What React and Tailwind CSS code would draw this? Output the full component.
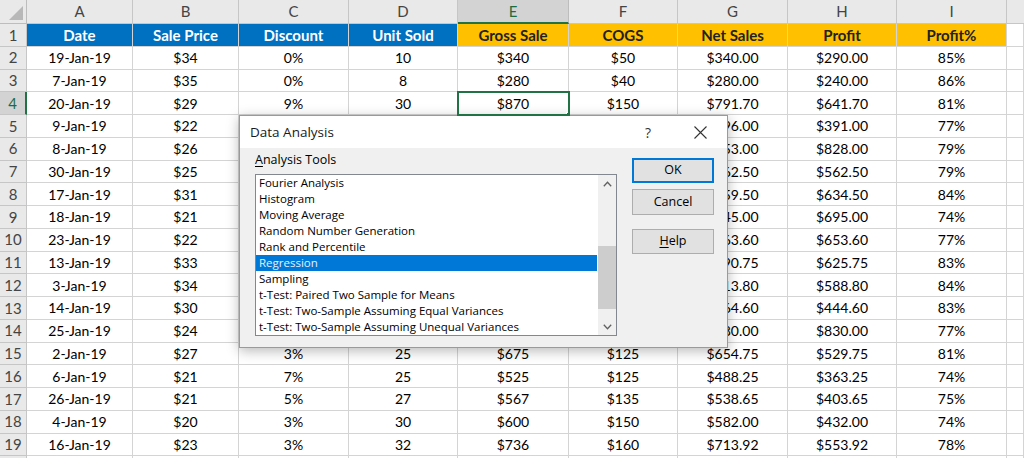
import React from "react";

const cols = ["A", "B", "C", "D", "E", "F", "G", "H", "I"];
const headers = ["Date", "Sale Price", "Discount", "Unit Sold", "Gross Sale", "COGS", "Net Sales", "Profit", "Profit%"];

// rows 5-14: columns C-F sit fully behind the dialog, so they are left blank
const rows = [
  ["19-Jan-19", "$34", "0%", "10", "$340", "$50", "$340.00", "$290.00", "85%"],
  ["7-Jan-19", "$35", "0%", "8", "$280", "$40", "$280.00", "$240.00", "86%"],
  ["20-Jan-19", "$29", "9%", "30", "$870", "$150", "$791.70", "$641.70", "81%"],
  ["9-Jan-19", "$22", "", "", "", "", "$496.00", "$391.00", "77%"],
  ["8-Jan-19", "$26", "", "", "", "", "$953.00", "$828.00", "79%"],
  ["30-Jan-19", "$25", "", "", "", "", "$662.50", "$562.50", "79%"],
  ["17-Jan-19", "$31", "", "", "", "", "$759.50", "$634.50", "84%"],
  ["18-Jan-19", "$21", "", "", "", "", "$845.00", "$695.00", "74%"],
  ["23-Jan-19", "$22", "", "", "", "", "$763.60", "$653.60", "77%"],
  ["13-Jan-19", "$33", "", "", "", "", "$790.75", "$625.75", "83%"],
  ["3-Jan-19", "$34", "", "", "", "", "$713.80", "$588.80", "84%"],
  ["14-Jan-19", "$30", "", "", "", "", "$564.60", "$444.60", "83%"],
  ["25-Jan-19", "$24", "", "", "", "", "$980.00", "$830.00", "77%"],
  ["2-Jan-19", "$27", "3%", "25", "$675", "$125", "$654.75", "$529.75", "81%"],
  ["6-Jan-19", "$21", "7%", "25", "$525", "$125", "$488.25", "$363.25", "74%"],
  ["26-Jan-19", "$21", "5%", "27", "$567", "$135", "$538.65", "$403.65", "75%"],
  ["4-Jan-19", "$20", "3%", "30", "$600", "$150", "$582.00", "$432.00", "74%"],
  ["16-Jan-19", "$23", "3%", "32", "$736", "$160", "$713.92", "$553.92", "78%"],
];

const tools = [
  "Fourier Analysis",
  "Histogram",
  "Moving Average",
  "Random Number Generation",
  "Rank and Percentile",
  "Regression",
  "Sampling",
  "t-Test: Paired Two Sample for Means",
  "t-Test: Two-Sample Assuming Equal Variances",
  "t-Test: Two-Sample Assuming Unequal Variances",
];

const cell = "flex items-center justify-center border-r border-b border-[#d4d4d4] whitespace-nowrap overflow-hidden";

function Sheet() {
  return (
    <div className="grid grid-cols-[27px_106px_106px_110px_109px_111px_109px_110px_109px_110px_1fr] grid-rows-[24px] auto-rows-[22.75px] text-[14px] text-black [font-family:Lato,'Open_Sans',sans-serif]">
      {/* corner */}
      <div className="relative bg-[#e9e9e9] border-r border-b border-[#bdbdbd]">
        <svg className="absolute right-[3px] bottom-[3px]" width="14" height="14" viewBox="0 0 14 14">
          <polygon points="14,0 14,14 0,14" fill="#b8b8b8" />
        </svg>
      </div>
      {cols.map((c) => (
        <div
          key={c}
          className={
            c === "E"
              ? "flex items-center justify-center bg-[#d3d3d3] border-r border-[#bdbdbd] border-b-2 border-b-[#217346] text-[15px] text-[#1e6b3f]"
              : "flex items-center justify-center bg-[#e9e9e9] border-r border-b border-[#c6c6c6] text-[15px] text-[#444]"
          }
        >
          {c}
        </div>
      ))}
      <div className="bg-[#e9e9e9] border-b border-[#c6c6c6]" />

      {/* row 1 headers */}
      <div className="flex items-center justify-center bg-[#e9e9e9] border-r border-b border-[#c6c6c6] text-[15px] text-[#444]">1</div>
      {headers.map((h, i) => (
        <div
          key={h}
          className={
            i < 4
              ? `${cell} bg-[#0070c0] text-white font-bold text-[15px]`
              : `${cell} bg-[#ffc000] text-[#222] font-bold text-[15px]`
          }
        >
          {h}
        </div>
      ))}
      <div className={cell} />

      {rows.map((r, ri) => {
        const n = ri + 2;
        return (
          <React.Fragment key={n}>
            <div
              className={
                n === 4
                  ? "flex items-center justify-center bg-[#d3d3d3] border-b border-[#c6c6c6] border-r-2 border-r-[#217346] text-[15px] text-[#1e6b3f]"
                  : "flex items-center justify-center bg-[#e9e9e9] border-r border-b border-[#c6c6c6] text-[15px] text-[#444]"
              }
            >
              {n}
            </div>
            {r.map((v, ci) => {
              const selected = n === 4 && ci === 4;
              return (
                <div key={ci} className={selected ? `${cell} relative outline-2 outline-[#217346] -outline-offset-1 z-10` : cell}>
                  {v}
                  {selected && <span className="absolute -right-[3px] -bottom-[3px] w-[5px] h-[5px] bg-[#217346] border border-white" />}
                </div>
              );
            })}
            <div className={cell} />
          </React.Fragment>
        );
      })}
      {/* row 20, only its top edge is in view */}
      <div className="bg-[#e9e9e9] border-r border-b border-[#c6c6c6]" />
      {Array.from({ length: 10 }).map((_, i) => (
        <div key={i} className={cell} />
      ))}
    </div>
  );
}

function Chevron({ up }) {
  return (
    <svg width="9" height="6" viewBox="0 0 9 6">
      <polyline
        points={up ? "0.8,5.2 4.5,1.3 8.2,5.2" : "0.8,0.8 4.5,4.7 8.2,0.8"}
        fill="none"
        stroke="#606060"
        strokeWidth="1.3"
      />
    </svg>
  );
}

function Dialog() {
  return (
    <div className="absolute left-[239px] top-[115px] w-[489px] h-[233px] flex flex-col bg-[#f0f0f0] border border-[#9a9a9a] shadow-[0_3px_12px_rgba(0,0,0,0.28)] text-[11.5px] text-black [font-family:'Open_Sans','Noto_Sans',sans-serif]">
      <div className="h-[32px] bg-white flex items-center pl-[10px] pr-[20px]">
        <span className="text-[13.5px] text-[#1a1a1a]">Data Analysis</span>
        <span className="ml-auto text-[14px] text-[#333] mr-[43px]">?</span>
        <svg width="13" height="13" viewBox="0 0 13 13">
          <path d="M0.5 0.5 L12.5 12.5 M12.5 0.5 L0.5 12.5" stroke="#333" strokeWidth="1.1" />
        </svg>
      </div>
      <div className="flex pl-[15px] pt-[4px]">
        <div className="flex flex-col">
          <div className="h-[16px] leading-[16px] text-[12.5px] mb-[6px]">
            <span className="underline underline-offset-2">A</span>nalysis Tools
          </div>
          <div className="w-[362px] h-[162px] border border-[#828790] bg-white flex">
            <div className="flex-1 flex flex-col">
              {tools.map((t) => (
                <div
                  key={t}
                  className={
                    t === "Regression"
                      ? "h-[16px] leading-[16px] pl-[3px] bg-[#0078d7] text-[#e6f0fb] whitespace-nowrap"
                      : "h-[16px] leading-[16px] pl-[3px] whitespace-nowrap"
                  }
                >
                  {t}
                </div>
              ))}
            </div>
            <div className="w-[18px] ml-[1px] bg-[#f0f0f0] flex flex-col">
              <div className="h-[17px] flex items-center justify-center">
                <Chevron up />
              </div>
              <div className="flex-1 flex flex-col">
                <div className="h-[54px]" />
                <div className="h-[63px] bg-[#cdcdcd]" />
              </div>
              <div className="h-[17px] flex items-center justify-center">
                <Chevron />
              </div>
            </div>
          </div>
        </div>
        <div className="flex flex-col ml-[15px] pt-[6px] text-[12.5px]">
          <button className="w-[82px] h-[25px] bg-[#e1e1e1] border-2 border-[#0078d7]">OK</button>
          <button className="w-[82px] h-[26px] mt-[6px] bg-[#e1e1e1] border border-[#adadad]">Cancel</button>
          <button className="w-[82px] h-[25px] mt-[14px] bg-[#e1e1e1] border border-[#adadad]">
            <span className="underline underline-offset-2">H</span>elp
          </button>
        </div>
      </div>
    </div>
  );
}

export default function App() {
  return (
    <div className="relative w-[1024px] h-[458px] overflow-hidden bg-white">
      <Sheet />
      <Dialog />
    </div>
  );
}
